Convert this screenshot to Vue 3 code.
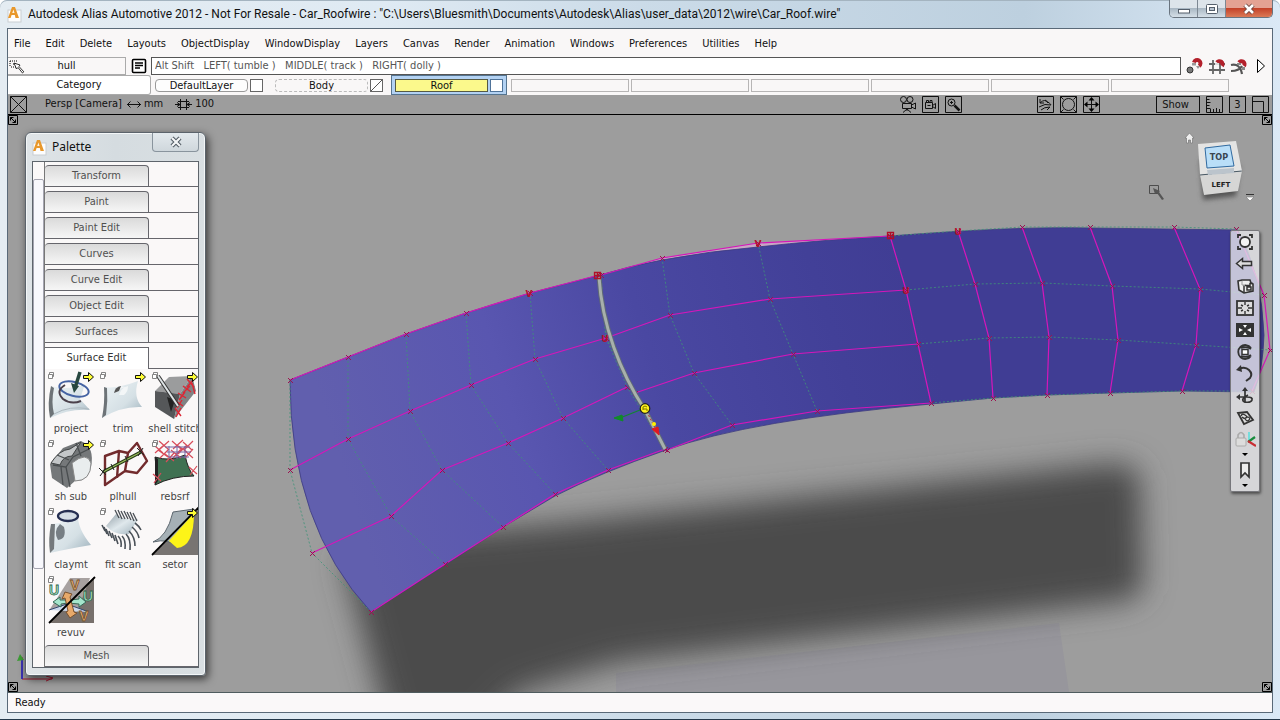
<script setup>
const menus = ['File', 'Edit', 'Delete', 'Layouts', 'ObjectDisplay', 'WindowDisplay', 'Layers', 'Canvas', 'Render', 'Animation', 'Windows', 'Preferences', 'Utilities', 'Help']
const tabs = ['Transform', 'Paint', 'Paint Edit', 'Curves', 'Curve Edit', 'Object Edit', 'Surfaces']
const tools = [
  { id: 'project', more: true }, { id: 'trim', more: true }, { id: 'shell stitch', more: true },
  { id: 'sh sub', more: true }, { id: 'plhull' }, { id: 'rebsrf' },
  { id: 'claymt' }, { id: 'fit scan' }, { id: 'setor', more: true, full: true },
  { id: 'revuv' },
]
const sym = (id) => '#tool-' + id.replace(' ', '-')
const navTools = ['wheel', 'back', 'cube', 'fit', 'center', 'orbit', 'undo', 'turn', 'plane', 'lock', 'mark']

// control vertices of the three patches, row by row
const left = [
  [[290, 380], [348, 357], [406, 334], [466, 313], [530, 293], [599, 275]],
  [[290, 470], [348, 439], [410, 411], [471, 385], [535, 359], [606, 338]],
  [[312, 553], [391, 516], [442, 470], [508, 443], [563, 418], [627, 387]],
  [[371, 612], [445, 564], [503, 527], [555, 494], [608, 470], [665, 449]],
]
const mid = [
  [[601, 275], [662, 258], [758, 243], [890, 236]],
  [[606, 338], [670, 315], [770, 299], [906, 290]],
  [[635, 393], [694, 373], [793, 354], [918, 344]],
  [[667, 450], [732, 425], [817, 411], [931, 403]],
]
const right = [
  [[890, 236], [958, 231], [1022, 227], [1090, 227], [1174, 227], [1236, 229]],
  [[906, 290], [975, 284], [1042, 283], [1112, 286], [1200, 289], [1264, 295]],
  [[918, 344], [989, 338], [1049, 337], [1118, 340], [1196, 345], [1270, 350]],
  [[931, 403], [993, 398], [1047, 395], [1110, 393], [1182, 391], [1252, 391]],
]
const columns = (patch) => patch[0].map((_, i) => patch.map((row) => row[i]))
const pts = (line) => line.map((p) => p.join(',')).join(' ')
const solid = [...left, ...mid, ...columns(right)].map(pts)
const dotted = [...columns(left), ...columns(mid).slice(0, 3), ...right].map(pts)
const cvs = [...left, ...mid, ...right].flat()
const cross = cvs.map(([x, y]) => `M${x - 2} ${y - 2}l5 5m0-5l-5 5`).join('')
const marks = [['V', 529, 297], ['U', 605, 342], ['V', 758, 247], ['U', 958, 235], ['U', 906, 294]]
</script>

<template>
  <div class="window">
    <header class="title">
      <svg class="logo" viewBox="0 0 15 17"><rect x="1" y="4" width="13" height="12" fill="#fdfdfd" stroke="#c9ced2" /><path d="M1 12L5 1h3l4 11H8.500L7.800 9H4.600L3.600 12z" fill="#e8982c" /><path d="M5.200 7L6.500 3.500L7.500 7z" fill="#fff3dc" /></svg>
      <h1>Autodesk Alias Automotive 2012 - Not For Resale - Car_Roofwire : "C:\Users\Bluesmith\Documents\Autodesk\Alias\user_data\2012\wire\Car_Roof.wire"</h1>
      <div class="caption">
        <button aria-label="Minimize"><svg viewBox="0 0 14 12"><rect x="1.500" y="6.500" width="11" height="3.500" fill="#fff" stroke="#555f6b" /></svg></button>
        <button aria-label="Maximize"><svg viewBox="0 0 14 12"><rect x="1.500" y="1.500" width="11" height="9" rx="1" fill="#fff" stroke="#555f6b" /><rect x="4.500" y="4.500" width="5" height="3" fill="#b9c4d0" stroke="#555f6b" /></svg></button>
        <button class="close" aria-label="Close"><svg viewBox="0 0 14 12"><path d="M3 2l8 8M11 2l-8 8" stroke="#6d4640" stroke-width="4.500" /><path d="M3 2l8 8M11 2l-8 8" stroke="#fff" stroke-width="2.600" /></svg></button>
      </div>
    </header>

    <div class="client">
      <nav class="menus"><button v-for="m in menus" :key="m">{{ m }}</button></nav>

      <div class="prompt">
        <button class="hull"><svg viewBox="0 0 16 16"><path d="M1 2h8M1 2v6M4 5h4M2 8h5" stroke="#000" stroke-dasharray="1 1" fill="none" /><path d="M5 4l2.500 6 1.500-1.500 4.500 5.500 1.300-1.200L10 7.500 11 6z" fill="#fff" stroke="#000" stroke-width=".8" /></svg><span>hull</span></button>
        <button class="list" aria-label="Prompt history"><svg viewBox="0 0 16 16"><rect x="1.500" y="1.500" width="13" height="13" rx="1" fill="#fff" stroke="#000" stroke-width="1.600" /><path d="M4 5h8M4 7.500h8M4 10h5" stroke="#000" stroke-width="1.300" /></svg></button>
        <input type="text" aria-label="Prompt line" readonly value="Alt Shift   LEFT( tumble )   MIDDLE( track )   RIGHT( dolly )" />
        <div class="snaps">
          <button aria-label="Snap to curve point"><svg viewBox="0 0 18 18"><circle cx="4" cy="13" r="3" fill="#777" stroke="#333" /><path d="M8 5.500a3.300 3.300 0 1 1 5 3.500" fill="none" stroke="#b3202b" stroke-width="4" /><path d="M6 6h4v2.500H6zM10 9h4l-2 3z" fill="#999" /></svg></button>
          <button aria-label="Snap to grid"><svg viewBox="0 0 18 18"><path d="M5 3v14M12 3v14M1 7h16M1 13h16" stroke="#666" stroke-width="1.800" /><path d="M9 5.500a3 3 0 1 1 5 3.500" fill="none" stroke="#b3202b" stroke-width="4" /><path d="M7 6h4v2H7z" fill="#ddd" /></svg></button>
          <button aria-label="Snap to curve"><svg viewBox="0 0 18 18"><path d="M1 8q9-2 11 9M1 14q8 0 11-5" stroke="#555" stroke-width="2.200" fill="none" /><path d="M9 5.500a3 3 0 1 1 5 3.500" fill="none" stroke="#b3202b" stroke-width="4" /><path d="M7 6h4v2H7zM12 10h3v3h-3z" fill="#888" /></svg></button>
          <button aria-label="More"><svg viewBox="0 0 18 18"><path d="M5.500 2.500v13l7-6.500z" fill="#fff" stroke="#000" /></svg></button>
        </div>
      </div>

      <div class="layers">
        <button class="category">Category</button>
        <div class="layer"><button class="name">DefaultLayer</button><input type="checkbox" aria-label="DefaultLayer visible" /></div>
        <div class="layer dashed"><button class="name">Body</button><input class="half" type="checkbox" aria-label="Body visible" /></div>
        <div class="layer active"><button class="name">Roof</button><input type="checkbox" aria-label="Roof visible" /></div>
        <div v-for="n in 6" :key="n" class="slot"></div>
      </div>

      <div class="viewbar">
        <button class="ico" aria-label="Close view"><svg viewBox="0 0 17 17"><path d="M.500 .500h16v16H.500zM.500 .500l16 16M16.500 .500l-16 16" /></svg></button>
        <span class="persp">Persp [Camera]</span>
        <svg class="arrows" viewBox="0 0 17 9"><path d="M1 4.500h14M4.500 1.500l-3 3 3 3M11.500 1.500l3 3-3 3" /></svg>
        <span class="unit">mm</span>
        <svg class="grid" viewBox="0 0 19 13"><path d="M1 6.500h5M13 6.500h5M6.500 1v11M12.500 1v11M4 3.500h11M4 9.500h11M3 4.500l3 2-3 2M16 4.500l-3 2 3 2" /></svg>
        <span>100</span>
        <div class="group push">
          <button class="ico" aria-label="Camera"><svg viewBox="0 0 17 17"><circle cx="4.500" cy="3.500" r="3" /><circle cx="11" cy="3.500" r="3" /><path d="M3.500 7.500h9v5h-9zM12.500 9l4-2v6l-4-2M8 13v2M8 13l-4 3.500M8 13l4 3.500" /></svg></button>
          <button class="ico" aria-label="Record"><svg viewBox="0 0 17 17"><path d="M.500 .500h16v16H.500zM3.500 6.500h7v6h-7zM10.500 9.500l3-2v5l-3-2M5.500 9.500h3M4.500 6V4.500h2V6M8 6V4.500h2V6" /></svg></button>
          <button class="ico" aria-label="Zoom"><svg viewBox="0 0 17 17"><path d="M.500 .500h16v16H.500zM5 6.500h3M6.500 5v3" /><circle cx="6.500" cy="6.500" r="3.500" /><path d="M9.500 9.500l5 5" stroke-width="2.500" /></svg></button>
        </div>
        <div class="group second">
          <button class="ico" aria-label="Previous view"><svg viewBox="0 0 17 17"><path d="M.500 .500h16v16H.500zM3 3v4h4M3 7q5-5 8 0M2 11q6-4 12-2M8 4q6 4 6 5M4 14q3-3 9-3l-3 3" /></svg></button>
          <button class="ico" aria-label="Look at"><svg viewBox="0 0 17 17"><path d="M.500 .500h16v16H.500zM.500 .500l3 3M16.500 .500l-3 3M.500 16.500l3-3M16.500 16.500l-3-3" /><circle cx="8.500" cy="8.500" r="6" /></svg></button>
          <button class="ico" aria-label="Pan"><svg viewBox="0 0 17 17"><path d="M.500 .500h16v16H.500zM8.500 2v13M2 8.500h13" /><path d="M8.500 1l3 3.500h-6zM8.500 16l3-3.500h-6zM1 8.500l3.500-3v6zM16 8.500l-3.500-3v6z" fill="#000" stroke="none" /></svg></button>
        </div>
        <div class="group third">
          <button class="show">Show</button>
          <button class="ico" aria-label="Rulers"><svg viewBox="0 0 17 17"><path d="M5 .500H.500v16h16V12M.500 3.500h3M.500 6.500h4M.500 9.500h3M.500 12.500h4M4.500 16v-3M7.500 16v-3M10.500 16v-4M13.500 16v-3M5 .500h11.500V12" /></svg></button>
          <button class="ico boxed">3</button>
          <button class="ico" aria-label="Resize view"><svg viewBox="0 0 17 17"><path d="M.500 .500h16v16H.500zM.500 5.500h11v11" /></svg></button>
        </div>
      </div>

      <main class="viewport">
        <svg class="scene" viewBox="8 115 1264 577" preserveAspectRatio="xMidYMid slice">
          <defs>
            <linearGradient id="surf" gradientUnits="userSpaceOnUse" x1="330" y1="430" x2="900" y2="250">
              <stop offset="0" stop-color="#615fae" /><stop offset=".3" stop-color="#5956b0" /><stop offset=".55" stop-color="#4a48a2" /><stop offset=".85" stop-color="#424098" /><stop offset="1" stop-color="#403d94" />
            </linearGradient>
            <filter id="soft" x="-10%" y="-20%" width="120%" height="140%"><feGaussianBlur stdDeviation="15" /></filter>
          </defs>
          <path d="M616 673L1059 623L1069 692H616z" fill="#97969c" />
          <path d="M342 555L420 535L560 523L1110 464Q1138 462 1140 480L1143 582Q1143 598 1122 601L620 662L520 692L470 740H392z" fill="#4b4b4b" filter="url(#soft)" />
          <path d="M601 275L662 258L758 243L890 236L758 247L662 261z" fill="#c9a5c4" />
          <path d="M290 380L348 357 406 334 466 313 530 293 600 275Q630 266 662 260Q710 251 758 247Q820 240 890 236Q1020 226 1090 228L1238 230Q1262 275 1264 335Q1263 370 1254 392L1182 391 1110 393 1047 395 993 398 931 404Q750 420 666 450Q600 473 555 496L503 527 445 565 371 612Q290 525 290 380z" fill="url(#surf)" stroke="#3c3a80" stroke-width=".8" />
          <polyline v-for="(l, i) in dotted" :key="'d' + i" :points="l" fill="none" stroke="#3f9378" stroke-opacity=".8" stroke-dasharray="2 2" />
          <polyline v-for="(l, i) in solid" :key="'s' + i" :points="l" fill="none" stroke="#d516ba" stroke-width="1.200" />
          <path :d="cross" stroke="#9b1150" fill="none" />
          <path d="M599 277C602 325 620 372 645 410L665 449" fill="none" stroke="#5f6977" stroke-width="5" />
          <path d="M599 277C602 325 620 372 645 410L665 449" fill="none" stroke="#a7b0ab" stroke-width="3" />
          <path d="M645 408L620 418" stroke="#128532" stroke-width="1.300" /><path d="M614 418l8-3 1 6z" fill="#118a2a" stroke="#118a2a" />
          <path d="M645 408L657 432" stroke="#b3272c" stroke-dasharray="2 2" /><path d="M652 429l6-2 1 8z" fill="#e01821" stroke="#e01821" /><circle cx="654" cy="424" r="2" fill="#fff200" />
          <circle cx="645" cy="408.500" r="4.800" fill="#fff31c" stroke="#222" stroke-width="1.200" /><path d="M647 407q-2-2-4 0v3M643 409h4v2" stroke="#7c7500" fill="none" />
          <path d="M594.500 272.500h6v6h-6zM597.500 272.500v6M594.500 275.500h6M887.500 232.500h6v6h-6zM890.500 232.500v6M887.500 235.500h6" fill="none" stroke="#b00f28" stroke-width="1.300" />
          <g class="marks"><text v-for="(m, i) in marks" :key="i" :x="m[1]" :y="m[2]">{{ m[0] }}</text></g>
          <path d="M22 679V657M22 679H52M46 676l7 2-7 3" stroke="#a31830" fill="none" /><path d="M22 679V659" stroke="#1b27d0" stroke-width="1.500" /><path d="M17 661l3-7 4 6z" fill="#3c9d35" />
        </svg>

        <svg v-for="c in ['tl', 'tr', 'bl', 'br']" :key="c" :class="['corner', c]" viewBox="0 0 10 10"><path d="M.500 .500h9v9h-9zM2.500 2.500l5 5M2.500 5.500v-3h3M7.500 4.500v3h-3" fill="none" stroke="#000" /></svg>

        <svg class="viewcube" viewBox="1145 125 115 85">
          <defs><filter id="cs" x="-30%" y="-30%" width="160%" height="160%"><feGaussianBlur stdDeviation="2.500" /></filter></defs>
          <path d="M1200 160L1240 165L1236 196L1203 200z" fill="#555" filter="url(#cs)" />
          <path d="M1198 144L1236 141L1242 171L1200 175z" fill="#e4e4e3" /><path d="M1200 175L1242 171L1238 191L1204 195z" fill="#d6d6d5" />
          <path d="M1200 175L1242 171" stroke="#4a5a66" stroke-dasharray="12 3" />
          <path d="M1205 148L1230 145L1234 166L1207 168z" fill="#b9def8" stroke="#306aa0" /><path d="M1207 170l27-2v5l-26 2z" fill="#bbc4cc" />
          <text class="top" x="1219" y="160">TOP</text><text class="side" x="1221" y="187">LEFT</text>
          <path d="M1185 138l4.500-5 4.500 5h-1.500v5h-2v-3h-2v3h-2v-5z" fill="#eee" stroke="#777" stroke-width=".7" />
          <path d="M1246 194.500h8" stroke="#333" /><path d="M1246 197h8l-4 4z" fill="#fff" stroke="#777" stroke-width=".6" />
          <path d="M1149.500 185.500h9v8h-9z" fill="none" stroke="#4d4d4d" /><path d="M1153 188l7 3-1 1 5 7-2 1-5-7-2 1z" fill="#555" />
        </svg>

        <aside class="navbar">
          <button v-for="n in navTools" :key="n" :aria-label="n" :class="n"><svg viewBox="0 0 22 22"><use :href="'#nav-' + n" /></svg></button>
        </aside>

        <section class="palette">
          <header>
            <svg class="logo" viewBox="0 0 15 17"><rect x="1" y="4" width="13" height="12" fill="#fdfdfd" stroke="#c9ced2" /><path d="M1 12L5 1h3l4 11H8.500L7.800 9H4.600L3.600 12z" fill="#e8982c" /><path d="M5.200 7L6.500 3.500L7.500 7z" fill="#fff3dc" /></svg>
            <h2>Palette</h2>
            <button aria-label="Close palette"><svg viewBox="0 0 14 12"><path d="M3 2l8 8M11 2l-8 8" stroke="#4e5861" stroke-width="4.200" /><path d="M3 2l8 8M11 2l-8 8" stroke="#f5f7f8" stroke-width="2.200" /></svg></button>
          </header>
          <div class="body">
            <div class="scroll"><i></i></div>
            <div class="shelves">
              <div v-for="t in tabs" :key="t" class="shelf"><button>{{ t }}</button></div>
              <div class="shelf open"><button>Surface Edit</button></div>
              <div class="tools">
                <button v-for="t in tools" :key="t.id">
                  <svg viewBox="0 0 52 52">
                    <g v-if="t.id === 'revuv'">
                      <path d="M49 4v46H4z" fill="#77706c" /><path d="M25 5h20L32 39 5 36z" fill="#a7a1a0" /><path d="M4 37l18-6 22 8" fill="#cbd8eb" stroke="#33466c" />
                      <path d="M8 29l7-5v3h10l9-1v-3l7 6-7 5v-3l-11-1-7 1v3z" fill="#a5e5cc" stroke="#376a58" /><path d="M20 19l7 2-2 3 4 15 3 1-7 5-4-6 2-1-3-13-3 1z" fill="#e8a96a" stroke="#79512f" />
                      <g class="uv"><text class="u" x="9" y="22">U</text><text class="v" x="30" y="17">V</text><text class="u" x="43" y="28">U</text><text class="v" x="39" y="48">V</text></g>
                      <path d="M4 50L50 4" stroke="#000" stroke-width="1.800" />
                    </g>
                    <use v-else :href="sym(t.id)" />
                    <path v-if="!t.full" d="M3.500 5.500h4v4h-4zM4.500 5V3.500h4v4H8" fill="#fff" stroke="#777" stroke-width=".9" />
                    <path v-if="t.more" d="M38.500 6.500h5v-3l5 4.500-5 4.500v-3h-5z" fill="#ffff35" stroke="#111" />
                  </svg>
                  <span>{{ t.id }}</span>
                </button>
              </div>
              <div class="shelf"><button>Mesh</button></div>
            </div>
          </div>
        </section>
      </main>

      <footer class="status">Ready</footer>
    </div>

    <svg class="defs" aria-hidden="true">
      <defs>
        <linearGradient id="steel" x1="0" y1="0" x2="1" y2="1"><stop offset="0" stop-color="#93a0a8" /><stop offset=".5" stop-color="#dfe8ec" /><stop offset="1" stop-color="#9fb1bb" /></linearGradient>
        <linearGradient id="pale" x1="0" y1="0" x2="1" y2="1"><stop offset="0" stop-color="#eef4f6" /><stop offset=".6" stop-color="#d5e0e5" /><stop offset="1" stop-color="#9cb0bb" /></linearGradient>
      </defs>
      <symbol id="tool-project" viewBox="0 0 52 52"><path d="M6 17Q22 22 40 15L35 30Q42 38 45 41Q25 39 5 49z" fill="url(#pale)" /><path d="M6 17Q2 34 5 49L9 45Q6 33 9 19z" fill="#6d7377" /><path d="M9 45Q25 36 44 40" stroke="#aebac1" fill="none" /><ellipse cx="29" cy="20" rx="15" ry="7" fill="none" stroke="#4563a3" stroke-width="2" transform="rotate(14 29 20)" /><path d="M20 16Q10 22 18 30Q26 36 36 32" fill="none" stroke="#4b414b" stroke-width="2" /><path d="M35 3l-5 16" stroke="#27473f" stroke-width="3.500" /><path d="M26 14l8 3-5 7z" fill="#27473f" /></symbol>
      <symbol id="tool-trim" viewBox="0 0 52 52"><path d="M7 18Q20 20 41 12Q36 28 45 38Q24 37 5 49Q9 32 7 18z" fill="url(#pale)" /><path d="M7 18Q8 34 5 49L9 46Q11 32 10 19z" fill="#6d7377" /><path d="M17 22Q22 16 28 18Q24 20 22 26L27 26Q31 23 31 17z" fill="#f3f6f7" /><path d="M17 24Q18 18 24 17L22 22z" fill="#555" /></symbol>
      <symbol id="tool-shell-stitch" viewBox="0 0 52 52"><path d="M6 22L20 8L43 7L31 25z" fill="#9b9c9d" /><path d="M6 22L31 25L25 50L6 38z" fill="#555759" /><path d="M43 7L47 22L25 50L31 25z" fill="#808384" /><path d="M18 28l8 3-4 12z" fill="#222" /><path d="M38 10l7 8M45 10l-7 8M34 17l8 6M41 17l-7 7M29 24l8 5M36 23l-6 8M27 32l7 5M33 31l-5 8M26 39l6 8M32 39l-5 9M43 14l3 11" stroke="#dd2634" stroke-width="1.400" /><path d="M9 7l20 30" stroke="#333" stroke-width="4" /><path d="M9 7l20 30" stroke="#dfe4e6" stroke-width="2" /></symbol>
      <symbol id="tool-sh-sub" viewBox="0 0 52 52"><path d="M5 27L18 11L36 4Q50 10 46 30Q42 45 30 44L22 51L7 41z" fill="#75787a" /><path d="M27 26Q42 14 46 26Q46 44 30 44z" fill="#e9edee" stroke="#888" /><path d="M6 26q8-13 19-14l11-7-9 14q-9 0-12 9z" fill="#c3c6c8" stroke="#414445" /><path d="M8 28l13 2 4 20M21 30l7-10 16-8M12 18l12 5M16 30l2 18M31 6l5 13" fill="none" stroke="#4a4e50" stroke-width="1.300" /></symbol>
      <symbol id="tool-plhull" viewBox="0 0 52 52"><path d="M8 19l14-5 9 2 9-10 10 18-10 12-12-2-20 14zM22 14l-2 27M31 16l-3 18M40 6l0 0" fill="none" stroke="#722b2d" stroke-width="2.400" stroke-linejoin="round" /><path d="M6 35L44 15" stroke="#243a16" stroke-width="3.200" /><path d="M6 35L44 15" stroke="#9abc5c" stroke-width="1.200" /><path d="M2 31l7 7M9 31l-6 8M40 11l7 7M46 11l-5 8M28 19l3 6M14 27l3 6" stroke="#222" /></symbol>
      <symbol id="tool-rebsrf" viewBox="0 0 52 52"><path d="M6 20Q20 25 36 18Q39 33 45 39Q23 39 6 48Q9 34 6 20z" fill="#3f7152" stroke="#222" /><path d="M6 20v28l3-4V22z" fill="#222" /><path d="M10 4l9 8M20 4l-9 8M23 4l9 8M34 3l-10 9M34 5l9 8M44 4l-9 9M9 13l10 7M20 12l-9 9M22 13l10 8M33 11l-9 10M35 13l9 8M44 12l-8 9M6 9l8 7M15 8l-9 8M28 8l10 7M38 8l-9 9M16 17l9 7M25 16l-8 9M4 37l8 7M12 36l-7 10M40 30l8 7M48 29l-7 9" stroke="#d84c5a" stroke-width="1.200" /><path d="M16 10h25M18 15h24M20 20h20M20 9v12M28 9v13M36 9v12" stroke="#7766a5" /></symbol>
      <symbol id="tool-claymt" viewBox="0 0 52 52"><path d="M6 19L15 18Q18 12 17 8L33 9Q32 23 46 40Q22 44 5 48z" fill="url(#pale)" /><path d="M6 19Q3 34 5 48L9 44L10 19z" fill="#74797c" /><path d="M15 19Q8 26 13 35Q22 34 19 22z" fill="#5c646a" opacity=".8" /><ellipse cx="23" cy="11" rx="10" ry="5" fill="#d5dde5" stroke="#252e51" stroke-width="2.300" /></symbol>
      <symbol id="tool-fit-scan" viewBox="0 0 52 52"><path d="M9 21L19 9Q26 16 41 14L32 29Q18 31 9 21z" fill="url(#steel)" /><path d="M18 5l4 8M21 5l4 9M24 6l4 8M27 6l4 8M30 7l4 8M33 7l4 9M36 8l4 8" stroke="#4a4f55" stroke-width="1.300" /><path d="M5 20l3 6M7 22l3 7M9 24l3 7M12 26l3 7M15 28l3 8M18 30l3 9M21 31q4 4 3 11M25 31q4 4 3 13M29 29q5 5 4 16M32 26q6 6 6 15M35 22q6 5 7 11M38 18q4 3 6 7" fill="none" stroke="#4a5158" stroke-width="1.600" /></symbol>
      <symbol id="tool-setor" viewBox="0 0 52 52"><path d="M50 3v47H4z" fill="#787472" /><path d="M4 37Q18 32 24 7L45 4Q43 42 28 42Q20 33 4 37z" fill="#a5b0b6" stroke="#5b666e" /><path d="M45 8Q45 42 28 43L20 36z" fill="#fdf418" /><path d="M3 50L50 2" stroke="#000" stroke-width="1.800" /></symbol>

      <symbol id="nav-wheel" viewBox="0 0 22 22"><path d="M4 7V4h3M15 4h3v3M18 15v3h-3M7 18H4v-3" fill="none" stroke="#333" stroke-width="1.800" /><circle cx="11" cy="11" r="5" fill="#f3f3f3" stroke="#333" stroke-width="1.800" /></symbol>
      <symbol id="nav-back" viewBox="0 0 22 22"><path d="M2.500 10.500l6-5v3h9v4h-9v3z" fill="#ddd" stroke="#333" stroke-width="1.500" /></symbol>
      <symbol id="nav-cube" viewBox="0 0 22 22"><path d="M4 6l4-1 8 0 1 3 2 1v7l-9 2-5-3z" fill="#eee" stroke="#333" stroke-width="1.600" /><path d="M8 6v4h4" fill="none" stroke="#999" /><path d="M11 10.500h5v-2h3M10 17v-6.500M13 12h4v3h-4z" fill="none" stroke="#333" stroke-width="1.500" /></symbol>
      <symbol id="nav-fit" viewBox="0 0 22 22"><rect x="3" y="4" width="16" height="14" fill="#ddd" stroke="#333" stroke-width="1.800" /><path d="M11 5v3M11 14v3M4 11h4M14 11h4M7 8l2 1M15 8l-2 1M7 14l2-1M15 14l-2-1" stroke="#333" stroke-width="1.400" /></symbol>
      <symbol id="nav-center" viewBox="0 0 22 22"><rect x="2" y="4" width="18" height="14" fill="#333" /><path d="M11 9l2-3h-4zM11 13l2 3h-4zM9 11l-4-2v4zM13 11l4-2v4z" fill="#fff" /></symbol>
      <symbol id="nav-orbit" viewBox="0 0 22 22"><path d="M17 7A7 7 0 1 0 17 15M7 7q6-2 10 1M7 15q6 2 10-1" fill="none" stroke="#333" stroke-width="1.800" /><rect x="8" y="8.500" width="6" height="5" fill="#fff" stroke="#333" stroke-width="1.500" /></symbol>
      <symbol id="nav-undo" viewBox="0 0 22 22"><path d="M5 6q6-3 10 1t1 8l-4 3" fill="none" stroke="#333" stroke-width="2" /><path d="M2 7l5-5 1 7z" fill="#333" /></symbol>
      <symbol id="nav-turn" viewBox="0 0 22 22"><path d="M11 4v14M4 12h9q6 0 5 3t-7 2q-3-1-2-3t5-4" fill="none" stroke="#333" stroke-width="1.700" /><path d="M11 2l3 4H8zM2 12l4-3v6z" fill="#333" /></symbol>
      <symbol id="nav-plane" viewBox="0 0 22 22"><path d="M4 6l9-1 6 8-9 4z" fill="#ddd" stroke="#333" stroke-width="1.800" /><path d="M7 9q1-3 4-1t1 3-4-1M11 11l3-1q3 1 1 3t-4-1" fill="none" stroke="#333" stroke-width="1.300" /></symbol>
      <symbol id="nav-lock" viewBox="0 0 22 22"><rect x="2" y="9" width="10" height="8" rx="1" fill="#ddd" stroke="#aaa" /><path d="M4 9V6q3-5 6 0v3" fill="none" stroke="#aaa" stroke-width="1.600" /><path d="M15 12V3" stroke="#76dcdc" stroke-width="2" /><path d="M14 13l7-5" stroke="#188c3c" stroke-width="2.200" /><path d="M14 12l8 5" stroke="#c82d33" stroke-width="2.200" /></symbol>
      <symbol id="nav-mark" viewBox="0 0 22 22"><path d="M7 3h8v14l-4-4-4 4z" fill="#ededed" stroke="#333" stroke-width="1.700" /></symbol>
    </svg>
  </div>
</template>

<style>
body { margin: 0; }
</style>

<style scoped>
* { box-sizing: border-box; }
button, input { font: inherit; color: inherit; margin: 0; padding: 0; border: 0; background: none; border-radius: 0; outline: 0; }
button svg { display: block; }
svg { flex: none; }
.window {
  min-height: 100vh; display: flex; flex-direction: column; padding: 0 7px 6px; overflow: hidden;
  font: 11px/14px "DejaVu Sans Condensed", "DejaVu Sans", sans-serif; color: #111;
  background: linear-gradient(90deg, #e4ecf2, #dfeaf3 30%, #cbdbe8 50%, #bdd0df 80%, #dbe9f6);
  border-bottom: 1px solid #24384a; box-shadow: inset 0 1px #a4b4c0; border-radius: 7px 7px 0 0;
}
.defs { position: absolute; width: 0; height: 0; }
.title { height: 28px; display: flex; align-items: center; }
.logo { width: 15px; height: 17px; }
.title h1 { flex: 1; margin: 0 0 0 6px; font: 12px/16px Roboto, "Noto Sans", sans-serif; color: #111; white-space: nowrap; overflow: hidden; }
.caption { align-self: flex-start; display: flex; height: 18px; border: 1px solid #69747f; border-top: 0; border-radius: 0 0 5px 5px; overflow: hidden; }
.caption button { width: 28px; display: grid; place-items: center; border-right: 1px solid #7d8893; background: linear-gradient(#dde4ea 45%, #aab8c4 50%, #d5dfe7); }
.caption svg { width: 14px; height: 12px; }
.caption .close { width: 46px; border: 0; background: linear-gradient(#e4a293 45%, #c4432a 50%, #db7a56); }
.client { flex: 1; display: flex; flex-direction: column; border: 1px solid #596978; background: #f9f7f7; }

.menus { height: 27px; padding: 3px 6px 0; display: flex; align-items: center; gap: 15px; }
.prompt { height: 19px; display: flex; align-items: center; }
.hull { width: 118px; height: 18px; position: relative; border: 1px solid #aaa; border-left: 0; }
.hull svg { position: absolute; left: 1px; top: 1px; width: 16px; height: 16px; }
.list { margin: 0 4px 0 5px; }
.list svg { width: 16px; height: 16px; }
.prompt input { flex: 1; min-width: 0; height: 18px; padding: 0 3px; border: 1px solid #555; background: #fff; color: #555; white-space: pre; }
.snaps { display: flex; gap: 4px; margin: 0 2px 0 5px; }
.snaps svg { width: 18px; height: 18px; }

.layers { height: 20px; display: flex; align-items: center; }
.category { width: 143px; height: 20px; flex: none; border: 1px solid #aaa; border-left: 0; border-radius: 0 3px 3px 0; background: #fff; }
.layer { flex: none; width: 116px; height: 20px; margin-right: 4px; padding: 0 4px; display: flex; align-items: center; gap: 2px; }
.layer .name { width: 93px; height: 13px; line-height: 11px; border: 1px solid #999; border-radius: 4px; background: #fdfdfd; }
.layer input { appearance: none; width: 13px; height: 13px; border: 1px solid #666; background: #fff; }
.dashed .name { border: 1px dashed #bbb; background: none; }
.layer .half { background: linear-gradient(to bottom right, #fff 47%, #555 48%, #555 52%, #fff 53%); }
.active { background: #b3d2f3; border: 1px solid #55748f; padding: 0 3px; }
.active .name { border: 1px solid #555a45; border-radius: 0; background: #fbf98c; }
.active input { border-color: #4f7399; }
.slot { flex: 0 1 118px; height: 13px; margin-right: 2px; border: 1px solid #b7b5b5; }

.viewbar { height: 20px; display: flex; align-items: center; padding: 0 3px 1px 2px; background: #9d9d9d; border-bottom: 1px solid #000; }
.viewbar svg { fill: none; stroke: #111; }
.ico, .ico svg { width: 17px; height: 17px; }
.persp { margin-left: 18px; }
.arrows { width: 17px; height: 9px; margin: 0 1px 0 4px; }
.grid { width: 19px; height: 13px; margin: 0 2px 0 11px; }
.group { display: flex; gap: 6px; }
.push { margin-left: auto; }
.second { margin-left: 75px; }
.third { margin-left: 56px; }
.show { width: 44px; height: 17px; border: 1px solid #111; padding-right: 5px; line-height: 15px; }
.boxed { border: 1px solid #111; line-height: 15px; }

.viewport { flex: 1; position: relative; overflow: hidden; background: #9d9d9d; }
.scene { position: absolute; inset: 0; width: 100%; height: 100%; }
.marks { font: bold 9px "DejaVu Sans", sans-serif; fill: #b4112b; text-anchor: middle; }
.corner { position: absolute; width: 10px; height: 10px; }
.tl { left: 0; top: 0; }
.tr { right: 0; top: 0; }
.bl { left: 0; bottom: 0; }
.br { right: 0; bottom: 0; }
.viewcube { position: absolute; right: 12px; top: 10px; width: 115px; height: 85px; }
.viewcube text { text-anchor: middle; font-weight: bold; fill: #3a4650; }
.viewcube .top { font-size: 9px; font-family: "DejaVu Sans Condensed", sans-serif; }
.viewcube .side { font-size: 7px; font-family: "DejaVu Sans", sans-serif; fill: #222; }

.navbar { position: absolute; right: 12px; top: 115px; width: 30px; padding: 0 0 9px; display: flex; flex-direction: column; align-items: center; background: rgba(229, 229, 232, .8); border: 1px solid #77777c; border-radius: 2px; box-shadow: 1px 2px 3px rgba(0, 0, 0, .5); }
.navbar button, .navbar svg { width: 22px; height: 22px; }
.navbar .lock, .navbar .mark { position: relative; }
.navbar .lock { margin-bottom: 9px; }
.navbar .lock::after, .navbar .mark::after { content: ""; position: absolute; left: 8px; top: 24px; border: 3px solid transparent; border-top-color: #000; border-bottom: 0; }

.palette { position: absolute; left: 17px; top: 17px; width: 181px; padding: 0 6px 7px; border: 1px solid #5b636b; border-radius: 6px 6px 4px 4px; background: linear-gradient(90deg, #dfe4e7, #d5dce0 50%, #d9dfe2); box-shadow: inset 0 0 0 1px #f3f6f7, 2px 3px 8px rgba(0, 0, 0, .65); }
.palette header { height: 28px; display: flex; align-items: center; }
.palette h2 { flex: 1; margin: 0 0 0 5px; font: 12px/16px "Noto Sans", sans-serif; }
.palette header button { align-self: flex-start; width: 47px; height: 19px; display: grid; place-items: center; border: 1px solid #89949d; border-top: 0; border-radius: 0 0 4px 4px; background: linear-gradient(#e3e9ed, #cfd7dc); }
.palette header button svg { width: 14px; height: 12px; }
.palette .body { display: flex; border: 1px solid #5e656c; background: #faf8f8; overflow: hidden; }
.scroll { width: 11px; padding: 17px 0 98px; display: flex; }
.scroll i { flex: 1; border: 1px solid #a4a4b0; border-radius: 2px; background: #f8f8fc; }
.shelves { flex: 1; min-width: 0; margin-top: -1px; border-left: 1px solid #777; }
.shelf { height: 26px; padding-top: 4px; border-bottom: 1px solid #66666c; display: flex; }
.shelf button { width: 104px; height: 21px; border: 1px solid #66666c; border-bottom: 0; border-left: 0; border-radius: 4px 4px 0 0; background: linear-gradient(#dadada, #f6f6f6); color: #505050; }
.shelf.open { position: relative; }
.shelf.open button { height: 22px; padding-bottom: 2px; margin-bottom: -1px; border-radius: 0; background: #fff; color: #333; }
.tools { display: grid; grid-template-columns: repeat(3, 52px); grid-auto-rows: 68px; }
.tools button { display: flex; flex-direction: column; align-items: center; white-space: nowrap; color: #444; }
.tools svg { width: 52px; height: 52px; }
.tools span { line-height: 14px; margin-top: 1px; }
.uv { font: bold 14px "Liberation Sans", sans-serif; text-anchor: middle; stroke-width: .8; }
.u { fill: #a9e6c9; stroke: #2f6248; }
.v { fill: #f4ba78; stroke: #75502c; }

.status { height: 20px; padding: 0 7px; line-height: 20px; border-top: 1px solid #4f5c5f; background: #faf8f9; }
</style>
